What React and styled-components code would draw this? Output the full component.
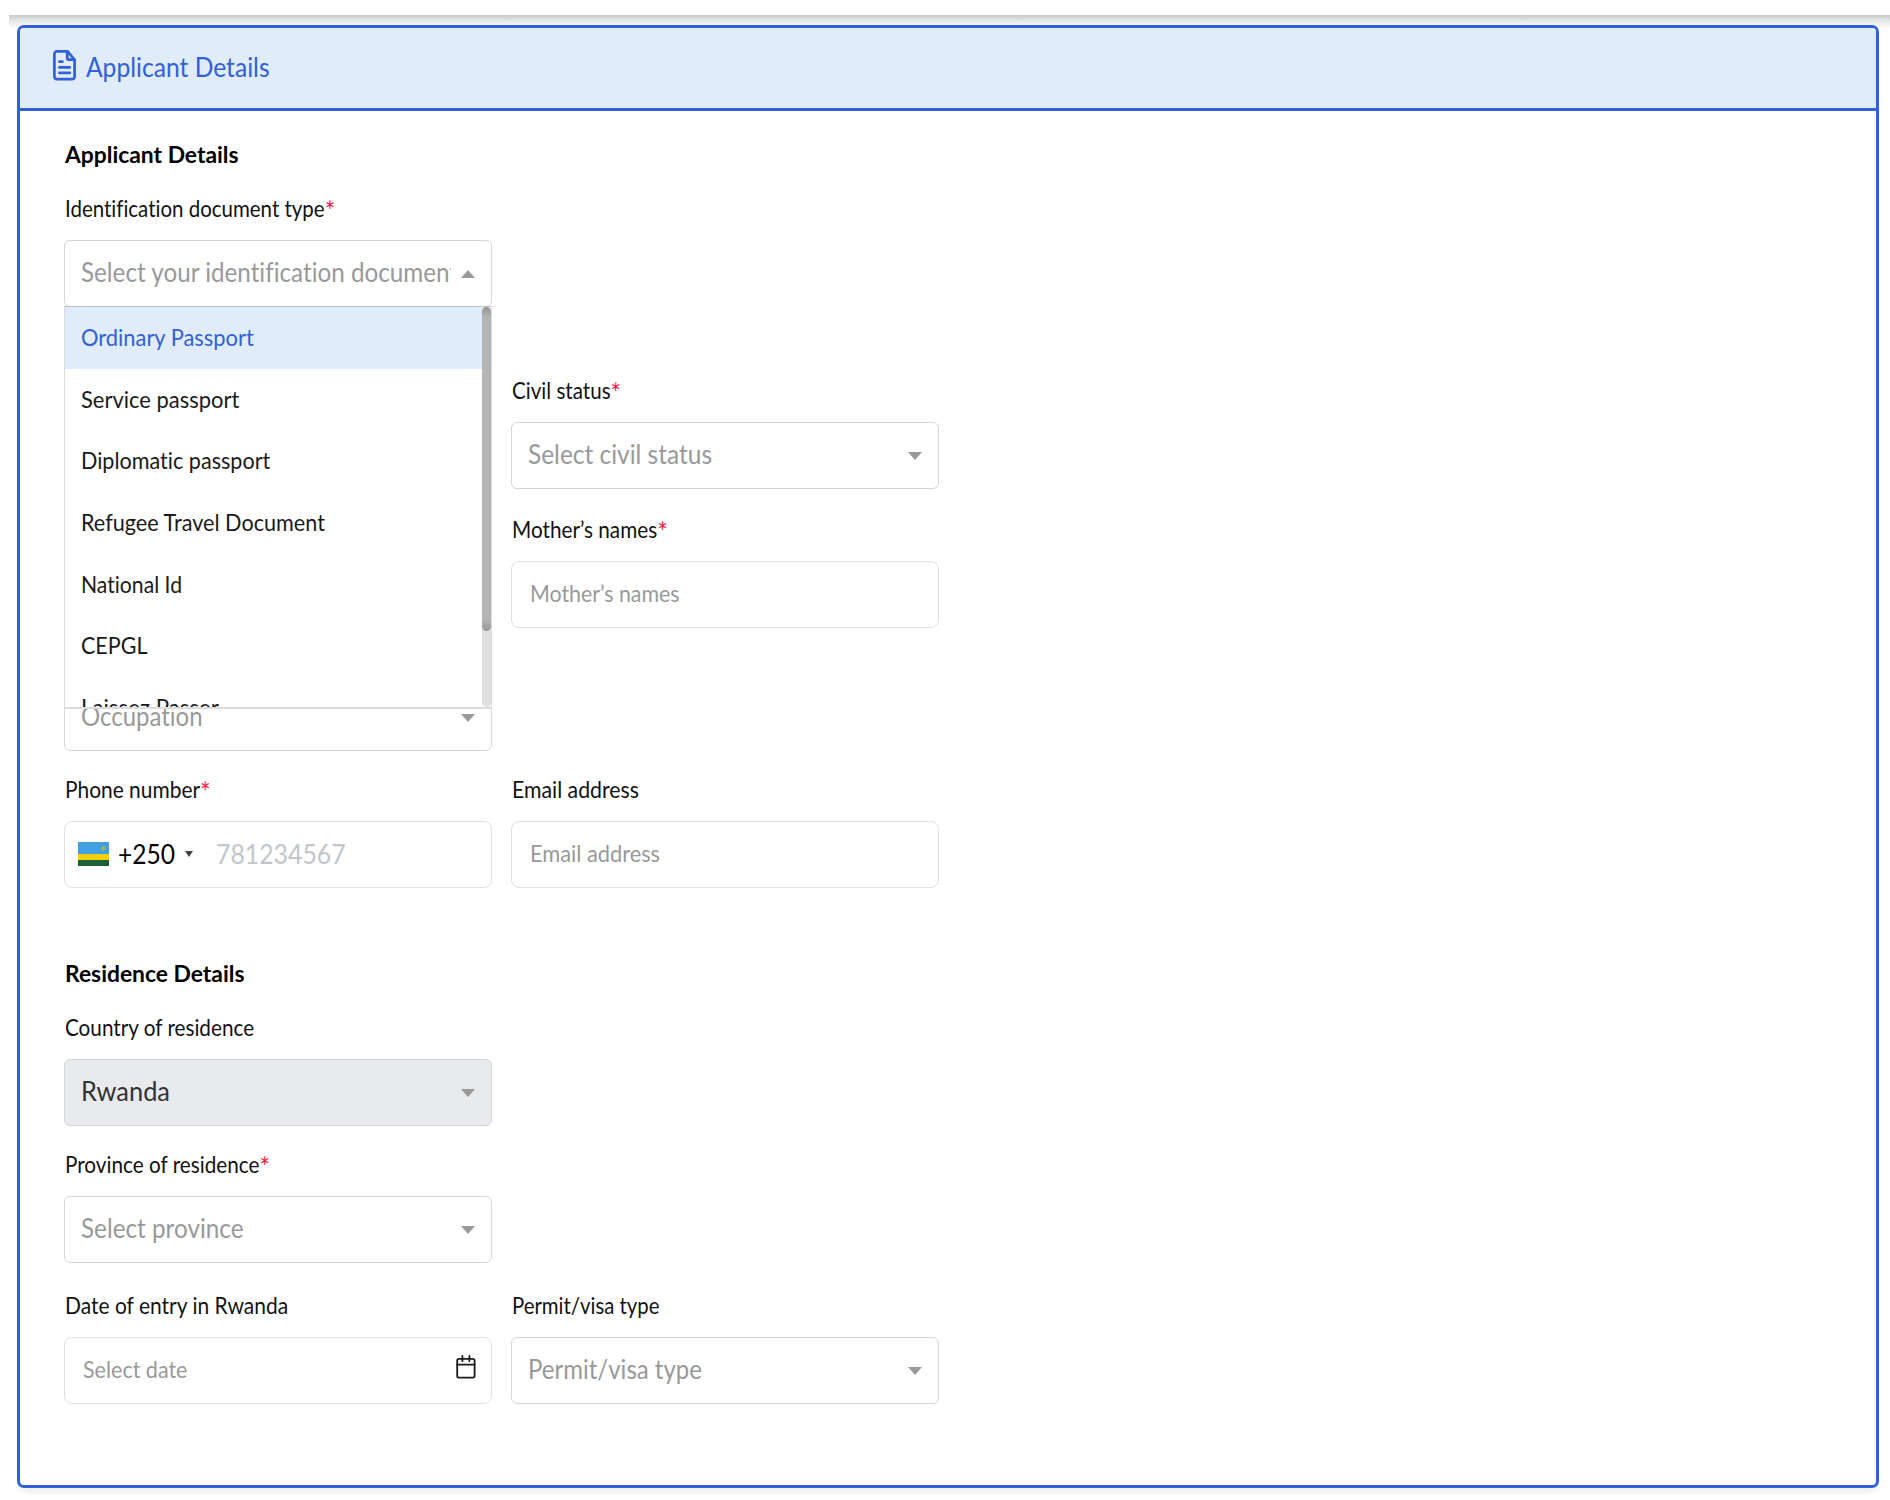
import React from "react";
import styled, { createGlobalStyle, css } from "styled-components";

const GlobalStyle = createGlobalStyle`
  *, *::before, *::after { box-sizing: border-box; }
  body {
    margin: 0;
    background: #fff;
    color: #111;
    font-family: Lato, "Open Sans", sans-serif;
    font-variant-ligatures: none;
    overflow: hidden;
  }
`;

const Page = styled.main`
  display: flex;
  flex-direction: column;
  width: 1890px;
  height: 1494px;
  padding-top: 15px;
  overflow: hidden;
`;

const TopShadow = styled.div`
  flex: none;
  height: 14px;
  margin: 0 0 -4px 9px;
  background: linear-gradient(#c9cbca, #e4e5e5 40%, #fff);
`;

const Card = styled.section`
  position: relative;
  flex: none;
  width: 1862px;
  height: 1463px;
  margin-left: 17px;
  border: 3px solid #3160d8;
  border-radius: 7px;
  background: #fff;
  box-shadow: 0 8px 8px -4px rgba(0, 0, 0, 0.08);
`;

const CardHeader = styled.header`
  display: flex;
  align-items: center;
  gap: 10px;
  height: 83px;
  padding: 0 0 3px 33px;
  border-bottom: 3px solid #3160d8;
  border-radius: 4px 4px 0 0;
  background: #e0ecfa;
  color: #3160d8;
  font-size: 26px;
`;

const CardBody = styled.div`
  padding: 28px 44px 0;
`;

/* Condensed text run: $k is the horizontal scale of the glyphs. */
const Text = styled.span`
  display: inline-block;
  white-space: pre;
  transform: scaleX(${(p) => p.$k});
  transform-origin: 0 50%;
`;

const Heading = styled.h2`
  height: 30px;
  margin: ${(p) => p.$top || 0}px 0 25px;
  padding-left: 0.7px;
  color: #000;
  font-size: 23.5px;
  font-weight: 700;
  line-height: 30px;
`;

const Row = styled.div`
  display: grid;
  grid-template-columns: 428px 428px;
  column-gap: 19px;
  margin-bottom: ${(p) => p.$gap}px;
`;

const Field = styled.div`
  position: relative;
  grid-column: ${(p) => p.$col || 1};
`;

const Label = styled.label`
  display: block;
  height: 46px;
  padding-left: 0.5px;
  font-size: 22.5px;
  line-height: 30px;
`;

const Star = styled.span`
  color: #ff1744;
  font-size: 27px;
  line-height: 0;
  vertical-align: -4px;
`;

const Box = styled.div`
  display: flex;
  align-items: center;
  height: 67px;
  border: 1.5px solid #d6d6d6;
  border-radius: 6px;
  background: #fff;
`;

const SelectBox = styled(Box)`
  justify-content: space-between;
  padding: 0 16px 4px 15.5px;
  color: #999;
  font-size: 26px;
  ${(p) =>
    p.$disabled &&
    css`
      background: #e9eaee;
      color: #333;
    `}
`;

const InputBox = styled(Box)`
  justify-content: space-between;
  padding: 0 15px 3px 17.5px;
  border-color: #dce1e6;
  border-radius: 8px;
  color: #999;
  font-size: 23px;
`;

const PhoneBox = styled(Box)`
  padding: 0 12px 2px;
  border-color: #dce1e6;
  border-radius: 8px;
  color: #000;
  font-size: 26px;
`;

const Clip = styled.div`
  width: 370px;
  overflow: hidden;
`;

const Caret = styled.i`
  width: 0;
  height: 0;
  margin-top: 4px;
  border: 7px solid transparent;
  ${(p) =>
    p.$up
      ? css`
          border-width: 0 7px 8px;
          border-bottom-color: #999;
          margin-top: 5px;
        `
      : css`
          border-width: 8px 7px 0;
          border-top-color: #999;
        `}
`;

const DialCaret = styled.i`
  width: 0;
  height: 0;
  margin: 0 23px 0 7px;
  border: solid transparent;
  border-width: 6px 4px 0;
  border-top-color: #444;
`;

const Placeholder = styled.span`
  color: #c0c6cb;
`;

const Flag = styled.svg`
  display: block;
  flex: none;
  width: 31px;
  height: 24px;
  margin: 1px 9px 0 0.5px;
`;

const Menu = styled.ul`
  position: absolute;
  z-index: 2;
  top: 112px;
  left: 0;
  display: flex;
  width: 428px;
  height: 403px;
  margin: 0;
  padding: 0;
  border: 1.5px solid #dcdcdc;
  border-top-color: #bdbdbd;
  border-bottom: 2px solid #dcdcdc;
  background: #fff;
  list-style: none;
  overflow: hidden;
`;

const Options = styled.div`
  flex: 1;
`;

const Option = styled.li`
  display: flex;
  align-items: center;
  height: 61.7px;
  padding: 0 0 1px 15.5px;
  background: ${(p) => (p.$active ? "#e0ecfa" : "#fff")};
  color: ${(p) => (p.$active ? "#3160d8" : "#1a1a1a")};
  font-size: 22.5px;
`;

const ScrollTrack = styled.div`
  width: 9px;
  border-radius: 5px;
  background: #e0e0e0;
`;

const ScrollThumb = styled.div`
  height: 324px;
  border-radius: 5px;
  background: linear-gradient(#939393, #b5b5b5 10px, #b5b5b5 312px, #979797);
`;

const LabelFor = ({ k, required, children }) => (
  <Label>
    <Text $k={k}>
      {children}
      {required && <Star>*</Star>}
    </Text>
  </Label>
);

const SelectField = ({ label, lk, required, value, k, col, disabled }) => (
  <Field $col={col}>
    <LabelFor k={lk} required={required}>{label}</LabelFor>
    <SelectBox $disabled={disabled}>
      <Text $k={k}>{value}</Text>
      <Caret />
    </SelectBox>
  </Field>
);

const InputField = ({ label, lk, required, value, k, col, icon }) => (
  <Field $col={col}>
    <LabelFor k={lk} required={required}>{label}</LabelFor>
    <InputBox>
      <Text $k={k}>{value}</Text>
      {icon}
    </InputBox>
  </Field>
);

const HeaderIcon = styled.svg`
  margin-top: -3px;
`;

const FileIcon = () => (
  <HeaderIcon width="23" height="31" viewBox="0 0 23 31" fill="none" stroke="#3160d8" strokeWidth="2.7" strokeLinecap="round" strokeLinejoin="round">
    <path d="M14.6 1.4H4A2.6 2.6 0 0 0 1.4 4v22.6a2.6 2.6 0 0 0 2.6 2.6h15a2.6 2.6 0 0 0 2.6-2.6V9.8z" />
    <path d="M14.2 1.6v6.1a2 2 0 0 0 2 2h5.2" />
    <path d="M6.4 11.7h3M6.4 17.4h10.4M6.4 22.8h10.4" />
  </HeaderIcon>
);

const CalendarSvg = styled.svg`
  margin-top: -4px;
`;

const CalendarIcon = () => (
  <CalendarSvg width="20" height="24" viewBox="0 0 20 24" fill="none" stroke="#1a1a1a" strokeWidth="1.8" strokeLinecap="round" strokeLinejoin="round">
    <rect x="1.2" y="3.8" width="17.4" height="18.8" rx="1.8" />
    <path d="M1.2 9.7h17.4M6.4 1v5.2M13.4 1v5.2" />
  </CalendarSvg>
);

const RwandaFlag = () => (
  <Flag viewBox="0 0 31 24" preserveAspectRatio="none">
    <rect width="31" height="12" fill="#429fe0" />
    <rect y="12" width="31" height="6" fill="#f0cf0a" />
    <rect y="18" width="31" height="6" fill="#1f5f38" />
    <circle cx="25.2" cy="6.5" r="2.3" fill="#93b55c" />
  </Flag>
);

const DOCUMENTS = [
  ["Ordinary Passport", 0.972],
  ["Service passport", 0.975],
  ["Diplomatic passport", 0.959],
  ["Refugee Travel Document", 0.961],
  ["National Id", 0.94],
  ["CEPGL", 0.956],
  ["Laissez Passer", 0.99],
];

export default function App() {
  return (
    <>
      <GlobalStyle />
      <Page>
        <TopShadow />
        <Card>
          <CardHeader>
            <FileIcon />
            <Text $k={0.947}>Applicant Details</Text>
          </CardHeader>
          <CardBody>
            <Heading><Text $k={0.972}>Applicant Details</Text></Heading>
            <Row $gap={69}>
              <Field>
                <LabelFor k={0.91} required>Identification document type</LabelFor>
                <SelectBox>
                  <Clip><Text $k={0.932}>Select your identification document</Text></Clip>
                  <Caret $up />
                </SelectBox>
                <Menu>
                  <Options>
                    {DOCUMENTS.map(([name, k], i) => (
                      <Option key={name} $active={i === 0}>
                        <Text $k={k}>{name}</Text>
                      </Option>
                    ))}
                  </Options>
                  <ScrollTrack>
                    <ScrollThumb />
                  </ScrollTrack>
                </Menu>
              </Field>
            </Row>
            <Row $gap={26}>
              <SelectField col={2} label="Civil status" lk={0.915} required value="Select civil status" k={0.941} />
            </Row>
            <Row $gap={56}>
              <InputField col={2} label="Mother’s names" lk={0.922} required value="Mother’s names" k={0.929} />
            </Row>
            <Row $gap={24}>
              <Field>
                <SelectBox>
                  <Text $k={0.922}>Occupation</Text>
                  <Caret />
                </SelectBox>
              </Field>
            </Row>
            <Row $gap={0}>
              <Field>
                <LabelFor k={0.93} required>Phone number</LabelFor>
                <PhoneBox>
                  <RwandaFlag />
                  <Text $k={0.945}>+250</Text>
                  <DialCaret />
                  <Placeholder><Text $k={0.955}>781234567</Text></Placeholder>
                </PhoneBox>
              </Field>
              <InputField col={2} label="Email address" lk={0.945} value="Email address" k={0.947} />
            </Row>
            <Heading $top={70}><Text $k={0.972}>Residence Details</Text></Heading>
            <Row $gap={24}>
              <SelectField label="Country of residence" lk={0.92} value="Rwanda" k={0.976} disabled />
            </Row>
            <Row $gap={28}>
              <SelectField label="Province of residence" lk={0.921} required value="Select province" k={0.934} />
            </Row>
            <Row $gap={0}>
              <InputField label="Date of entry in Rwanda" lk={0.933} value="Select date" k={0.935} icon={<CalendarIcon />} />
              <SelectField col={2} label="Permit/visa type" lk={0.905} value="Permit/visa type" k={0.924} />
            </Row>
          </CardBody>
        </Card>
      </Page>
    </>
  );
}
